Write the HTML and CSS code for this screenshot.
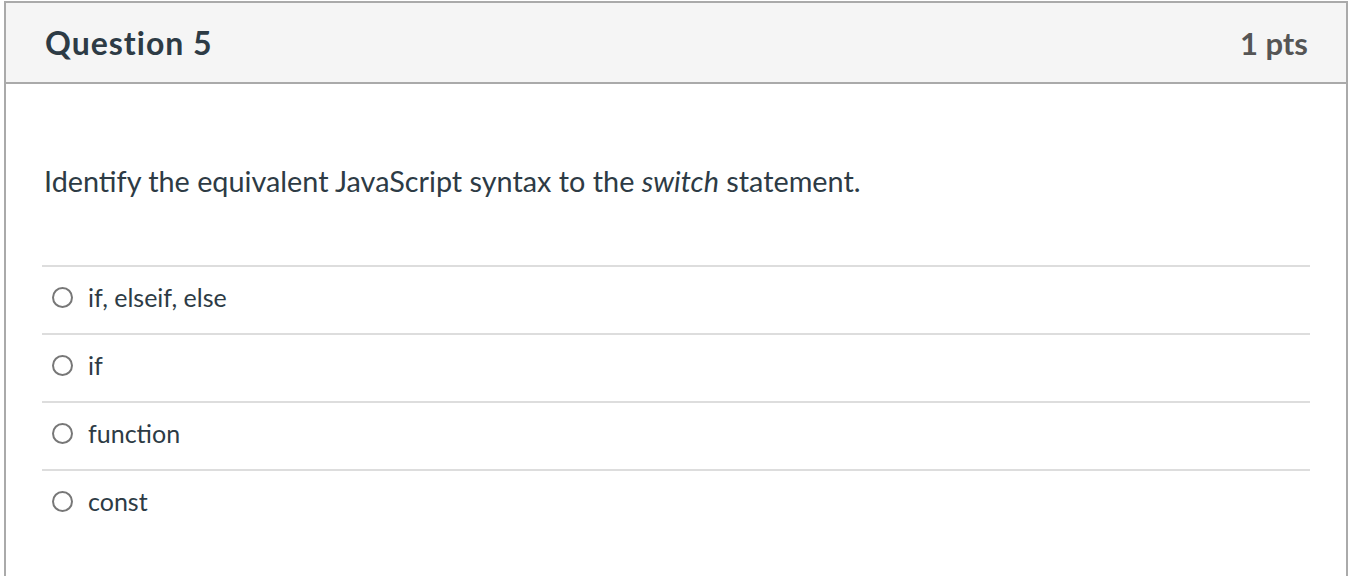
FILE: index.html
```html
<!DOCTYPE html>
<html lang="en">
<head>
<meta charset="utf-8">
<title>Question 5</title>
<link rel="stylesheet" href="styles.css">
</head>
<body>
<div class="quiz">
  <div class="question">
    <div class="question-header">
      <h2 class="question-title">Question 5</h2>
      <div class="question-points">1 pts</div>
    </div>
    <div class="question-body">
      <p class="question-text">Identify the equivalent JavaScript syntax to the <em>switch</em> statement.</p>
      <div class="answers">
        <label class="answer"><span class="radio"></span><span class="answer-text">if, elseif, else</span></label>
        <label class="answer"><span class="radio"></span><span class="answer-text">if</span></label>
        <label class="answer"><span class="radio"></span><span class="answer-text">function</span></label>
        <label class="answer"><span class="radio"></span><span class="answer-text">const</span></label>
      </div>
    </div>
  </div>
</div>
</body>
</html>
```

FILE: styles.css
```css
html, body {
  margin: 0;
  padding: 0;
  background: #ffffff;
}
body {
  font-family: Lato, "Open Sans", "Liberation Sans", sans-serif;
  color: #2d3b45;
  overflow: hidden;
}
.quiz {
  padding: 1px 0 0 4px;
}
.question {
  width: 1344px;
  box-sizing: border-box;
  border: 2px solid #aaaaaa;
  min-height: 700px;
}
.question-header {
  display: flex;
  justify-content: space-between;
  align-items: center;
  height: 79px;
  padding: 0 38px;
  background: #f5f5f5;
  border-bottom: 2px solid #aaaaaa;
}
.question-title {
  margin: 0 0 0 1px;
  font-size: 32px;
  letter-spacing: 1px;
  font-weight: 700;
  color: #2d3b45;
}
.question-points {
  font-size: 31px;
  font-weight: 700;
  color: #555555;
}
.question-body {
  padding: 0 36px;
}
.question-text {
  margin: 79px 0 66px 2px;
  font-size: 28.8px;
  line-height: 36px;
}
.answer {
  display: flex;
  align-items: center;
  height: 60px;
  padding-bottom: 6px;
  border-top: 2px solid #dddddd;
  padding-left: 10px;
  gap: 15px;
}
.radio {
  width: 21px;
  height: 21px;
  box-sizing: border-box;
  border: 2px solid #777777;
  border-radius: 50%;
  flex: none;
}
.answer-text {
  font-size: 25px;
  color: #2d3b45;
}
```
